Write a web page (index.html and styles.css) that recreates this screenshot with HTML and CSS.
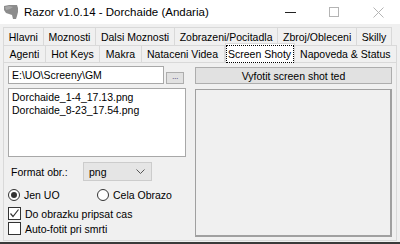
FILE: index.html
```html
<!DOCTYPE html>
<html lang="cs">
<head>
    <meta charset="UTF-8">
    <title>Razor v1.0.14 - Dorchaide (Andaria)</title>
    <link rel="stylesheet" href="styles.css">
</head>
<body>
<div class="window">
    <div class="titlebar">
        <svg class="app-icon" viewBox="0 0 16 16">
            <path d="M1 2 L6 1 L14 1 L15 4 L15 8 L14 12 L13 15 L10 15 L9 11 L6 10 L3 9 L1 6 Z" fill="#8c8c8c"/>
            <path d="M2 3 L6 2 L10 3 L7 5 L3 6 Z" fill="#a8a8a8"/>
        </svg>
        <span class="title">Razor v1.0.14 - Dorchaide (Andaria)</span>
        <div class="controls">
            <div class="ctrl">
                <svg width="11" height="11" viewBox="0 0 11 11"><path d="M0 5.5 H11" stroke="#222" stroke-width="1"/></svg>
            </div>
            <div class="ctrl">
                <svg width="10" height="10" viewBox="0 0 10 10"><rect x="0.5" y="0.5" width="9" height="9" fill="none" stroke="#b4b4b4"/></svg>
            </div>
            <div class="ctrl">
                <svg width="11" height="11" viewBox="0 0 11 11"><path d="M0.5 0.5 L10.5 10.5 M10.5 0.5 L0.5 10.5" stroke="#b4b4b4" stroke-width="1"/></svg>
            </div>
        </div>
    </div>

    <div class="tabs">
        <div class="tab-row row-back">
            <div class="tab">Hlavni</div>
            <div class="tab">Moznosti</div>
            <div class="tab">Dalsi Moznosti</div>
            <div class="tab">Zobrazeni/Pocitadla</div>
            <div class="tab">Zbroj/Obleceni</div>
            <div class="tab">Skilly</div>
        </div>
        <div class="tab-row row-front">
            <div class="tab">Agenti</div>
            <div class="tab">Hot Keys</div>
            <div class="tab">Makra</div>
            <div class="tab">Nataceni Videa</div>
            <div class="tab active"><span class="focus">Screen Shoty</span></div>
            <div class="tab">Napoveda &amp; Status</div>
        </div>
    </div>

    <div class="panel">
        <div class="col-left">
            <div class="path-row">
                <div class="path">E:\UO\Screeny\GM</div>
                <div class="browse">...</div>
            </div>
            <div class="list">
                <div class="item">Dorchaide_1-4_17.13.png</div>
                <div class="item">Dorchaide_8-23_17.54.png</div>
            </div>
            <div class="format-row">
                <span class="label">Format obr.:</span>
                <div class="select">
                    <span>png</span>
                    <svg width="9" height="5" viewBox="0 0 9 5"><path d="M0.5 0.5 L4.5 4.5 L8.5 0.5" fill="none" stroke="#555" stroke-width="1"/></svg>
                </div>
            </div>
            <div class="radio-row">
                <div class="option first">
                    <span class="radio checked"></span>
                    <span>Jen UO</span>
                </div>
                <div class="option">
                    <span class="radio"></span>
                    <span>Cela Obrazo</span>
                </div>
            </div>
            <div class="option check-row">
                <span class="check">
                    <svg width="11" height="11" viewBox="0 0 11 11"><path d="M1.5 5.5 L4 8.5 L9.5 1.5" fill="none" stroke="#333" stroke-width="1.2"/></svg>
                </span>
                <span>Do obrazku pripsat cas</span>
            </div>
            <div class="option check-row second-check">
                <span class="check"></span>
                <span>Auto-fotit pri smrti</span>
            </div>
        </div>
        <div class="col-right">
            <div class="shoot">Vyfotit screen shot ted</div>
            <div class="preview"></div>
        </div>
    </div>
</div>
</body>
</html>
```

FILE: styles.css
```css
*{
    margin: 0;
    padding: 0;
    box-sizing: border-box;
}
html,body {
    height: 100%;
}
body{
    font-family: "Liberation Sans", Arial, sans-serif;
    font-size: 10.5px;
    color: #000000;
    background-color: #f0f0f0;
}
.window{
    width: 400px;
    height: 244px;
    display: flex;
    flex-direction: column;
    background-color: #f0f0f0;
    border-bottom: 2px solid #3a3a3a;
}
.titlebar{
    height: 24px;
    flex-shrink: 0;
    background-color: #ffffff;
    display: flex;
    align-items: center;
}
.app-icon{
    width: 16px;
    height: 16px;
    margin-left: 3px;
}
.title{
    margin-left: 5px;
    font-size: 11.5px;
}
.controls{
    margin-left: auto;
    height: 100%;
    display: flex;
}
.ctrl{
    width: 44px;
    display: flex;
    align-items: center;
    justify-content: center;
}

/* tabs */
.tabs{
    margin-top: 3px;
    padding-left: 3px;
    flex-shrink: 0;
}
.tab-row{
    display: flex;
}
.row-back{
    width: 389px;
    height: 18px;
}
.row-front{
    width: 394px;
    height: 17px;
}
.tab{
    flex: 1 1 auto;
    padding: 0 4px;
    border: 1px solid #d9d9d9;
    border-left: none;
    border-bottom: none;
    background-color: #f0f0f0;
    display: flex;
    align-items: center;
    justify-content: center;
    white-space: nowrap;
}
.tab:first-child{
    border-left: 1px solid #d9d9d9;
}
.tab.active{
    position: relative;
    z-index: 1;
    height: 20px;
    margin-top: -2px;
    padding: 2px 1px 1px;
    background-color: #ffffff;
    border-left: 1px solid #d9d9d9;
}
.focus{
    width: 100%;
    height: 100%;
    outline: 1px dotted #000000;
    display: flex;
    align-items: center;
    justify-content: center;
}

/* panel */
.panel{
    flex: 1;
    margin: 0 3px 1px;
    padding: 3px 4px 0 4px;
    border: 1px solid #d9d9d9;
    display: flex;
    gap: 9px;
}
.col-left{
    width: 178px;
    display: flex;
    flex-direction: column;
}
.path-row{
    height: 18px;
    display: flex;
    align-items: flex-end;
}
.path{
    width: 156px;
    height: 18px;
    line-height: 16px;
    padding-left: 3px;
    background-color: #ffffff;
    border: 1px solid #a8a8a8;
}
.browse{
    width: 18px;
    height: 12px;
    margin-left: 2px;
    background-color: #e1e1e1;
    border: 1px solid #adadad;
    color: #6a5a8a;
    font-size: 9px;
    line-height: 6px;
    text-align: center;
    letter-spacing: -0.5px;
}
.list{
    height: 69px;
    margin-top: 4px;
    padding: 2px 3px;
    background-color: #ffffff;
    border: 1px solid #a8a8a8;
}
.item{
    line-height: 13px;
}
.format-row{
    margin-top: 5px;
    height: 19px;
    display: flex;
    align-items: center;
}
.label{
    width: 75px;
    padding-left: 3px;
}
.select{
    width: 69px;
    height: 19px;
    padding: 0 6px 0 5px;
    background-color: #e5e5e5;
    border: 1px solid #cccccc;
    display: flex;
    align-items: center;
    justify-content: space-between;
}
.radio-row{
    margin-top: 8px;
    height: 12px;
    display: flex;
}
.option{
    display: flex;
    align-items: center;
    gap: 4px;
}
.option.first{
    width: 89px;
}
.radio{
    width: 12px;
    height: 12px;
    border: 1px solid #333333;
    border-radius: 50%;
    background-color: #ffffff;
    display: flex;
    align-items: center;
    justify-content: center;
}
.radio.checked::after{
    content: "";
    width: 6px;
    height: 6px;
    border-radius: 50%;
    background-color: #333333;
}
.check-row{
    margin-top: 6px;
    height: 13px;
}
.check-row.second-check{
    margin-top: 2px;
}
.check{
    width: 13px;
    height: 13px;
    border: 1px solid #333333;
    background-color: #ffffff;
    display: flex;
    align-items: center;
    justify-content: center;
}
.col-right{
    width: 197px;
    display: flex;
    flex-direction: column;
}
.shoot{
    height: 17px;
    margin-top: 1px;
    background-color: #e1e1e1;
    border: 1px solid #adadad;
    display: flex;
    align-items: center;
    justify-content: center;
}
.preview{
    height: 148px;
    margin-top: 5px;
    border-style: solid;
    border-color: #a0a0a0;
    border-width: 1px 2px 2px 1px;
}
```
